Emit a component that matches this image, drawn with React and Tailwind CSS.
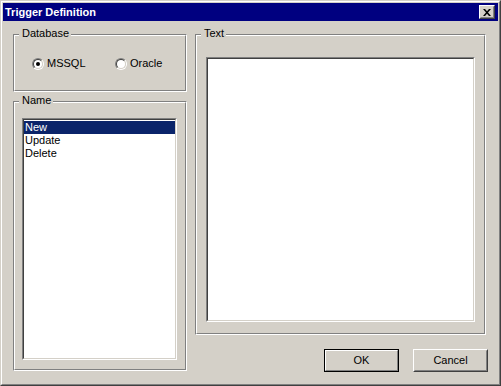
import React, { useState } from "react";

const font = { fontFamily: '"Liberation Sans", Arial, sans-serif' };

// etched frame with caption sitting on the top line
const GroupBox = ({ label, className, children }) => (
  <div className={`relative border border-t-[#808080] border-l-[#808080] border-r-white border-b-white ${className}`}>
    <div className="h-full border border-t-white border-l-white border-r-[#808080] border-b-[#808080]">
      {children}
    </div>
    <span className="absolute left-[5px] top-[-8px] bg-[#d4d0c8] pl-[3px] pr-[2px] text-[11px] leading-[13px] text-black">
      {label}
    </span>
  </div>
);

const Sunken = ({ className, children }) => (
  <div className={`border border-t-[#808080] border-l-[#808080] border-r-white border-b-white ${className}`}>
    <div className="h-full border border-t-[#404040] border-l-[#404040] border-r-[#d4d0c8] border-b-[#d4d0c8] bg-white">
      {children}
    </div>
  </div>
);

const Radio = ({ checked, label, onClick, className = "" }) => (
  <div className={`flex items-center gap-[3px] cursor-default ${className}`} onClick={onClick}>
    <div className="w-[12px] h-[12px] rounded-full border border-t-[#808080] border-l-[#808080] border-r-white border-b-white">
      <div className="w-full h-full rounded-full border border-t-[#404040] border-l-[#404040] border-r-[#d4d0c8] border-b-[#d4d0c8] bg-white flex items-center justify-center">
        {checked && <div className="w-[4px] h-[4px] rounded-full bg-black" />}
      </div>
    </div>
    <span className="text-[11px] leading-[13px] text-black">{label}</span>
  </div>
);

const Button = ({ children, isDefault }) => (
  <div
    className={`w-[75px] h-[23px] ${
      isDefault ? "border border-black" : "border border-t-white border-l-white border-r-[#404040] border-b-[#404040]"
    }`}
  >
    <div
      className={`h-full flex items-center justify-center text-[11px] text-black border ${
        isDefault
          ? "border-t-white border-l-white border-r-[#808080] border-b-[#808080]"
          : "border-t-[#d4d0c8] border-l-[#d4d0c8] border-r-[#808080] border-b-[#808080]"
      }`}
    >
      {children}
    </div>
  </div>
);

export default function App() {
  const [db, setDb] = useState("MSSQL");
  const [selected, setSelected] = useState("New");
  const names = ["New", "Update", "Delete"];

  return (
    <div style={font} className="w-[501px] h-[386px] bg-[#d4d0c8] border border-t-[#d4d0c8] border-l-[#d4d0c8] border-r-[#404040] border-b-[#404040]">
      <div className="h-full p-px flex flex-col border border-t-white border-l-white border-r-[#808080] border-b-[#808080]">
        {/* Title bar */}
        <div className="h-[18px] bg-[#000080] flex items-center justify-between pl-[2px] pr-[3px]">
          <span className="text-[11px] font-bold text-white leading-[13px]">Trigger Definition</span>
          <div className="w-[16px] h-[14px] border border-t-white border-l-white border-r-[#404040] border-b-[#404040]">
            <div className="h-full bg-[#d4d0c8] flex items-center justify-center border border-t-[#d4d0c8] border-l-[#d4d0c8] border-r-[#808080] border-b-[#808080]">
              <svg width="8" height="7" viewBox="0 0 8 7">
                <path d="M0 0h2l2 2.2L6 0h2L5 3.5 8 7H6L4 4.8 2 7H0l3-3.5z" fill="#000" />
              </svg>
            </div>
          </div>
        </div>

        {/* Client area */}
        <div className="flex pt-[13px] pl-[10px] gap-[8px]">
          <div className="w-[174px] flex flex-col gap-[9px]">
            <GroupBox label="Database" className="h-[58px]">
              <div className="flex pl-[17px] pt-[21px]">
                <Radio className="w-[83px]" checked={db === "MSSQL"} label="MSSQL" onClick={() => setDb("MSSQL")} />
                <Radio checked={db === "Oracle"} label="Oracle" onClick={() => setDb("Oracle")} />
              </div>
            </GroupBox>

            <GroupBox label="Name" className="h-[270px]">
              <div className="h-full pl-[7px] pt-[15px] pr-[8px] pb-[9px]">
                <Sunken className="h-full">
                  <div className="pt-px">
                    {names.map((n) => (
                      <div
                        key={n}
                        onClick={() => setSelected(n)}
                        className={`h-[13px] pl-[1px] text-[11px] leading-[13px] cursor-default ${
                          selected === n ? "bg-[#0a246a] text-white" : "text-black"
                        }`}
                      >
                        {n}
                      </div>
                    ))}
                  </div>
                </Sunken>
              </div>
            </GroupBox>
          </div>

          <div className="w-[293px] flex flex-col">
            <GroupBox label="Text" className="w-[291px] h-[301px]">
              <div className="h-full pl-[9px] pt-[21px] pr-[9px] pb-[11px]">
                <Sunken className="h-full" />
              </div>
            </GroupBox>
            <div className="flex justify-end gap-[14px] mt-[14px]">
              <Button isDefault>OK</Button>
              <Button>Cancel</Button>
            </div>
          </div>
        </div>
      </div>
    </div>
  );
}
